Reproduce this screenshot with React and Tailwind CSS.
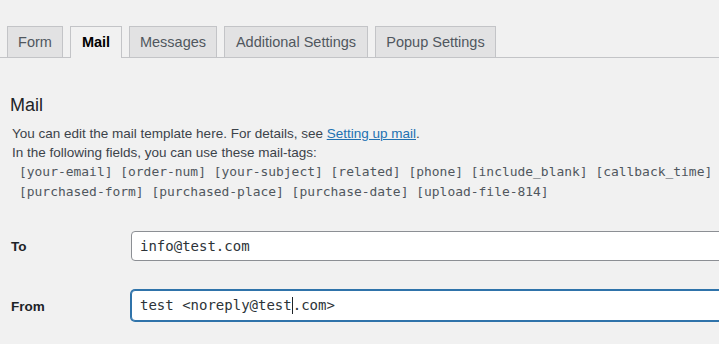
import { useState } from "react";

const tabs = [
  { label: "Form", w: "w-[56px]" },
  { label: "Mail", w: "w-[52px]" },
  { label: "Messages", w: "w-[88px]" },
  { label: "Additional Settings", w: "w-[144px]" },
  { label: "Popup Settings", w: "w-[121px]" },
];

const tagLines = [
  "[your-email] [order-num] [your-subject] [related] [phone] [include_blank] [callback_time]",
  "[purchased-form] [purchased-place] [purchase-date] [upload-file-814]",
];

function Field({ label, value, focused, caretAt }) {
  return (
    <div className="flex items-center">
      <div className="w-[131px] shrink-0 pl-[11px] pt-[3px] text-[13.5px] font-bold text-[#1d2327]">{label}</div>
      <div
        className={
          focused
            ? "flex h-[31px] w-[620px] shrink-0 items-center rounded-[4px] border border-[#2f73aa] bg-white px-[8px] shadow-[0_0_0_1px_#2f73aa]"
            : "flex h-[30px] w-[620px] shrink-0 items-center rounded-[4px] border border-[#8c8f94] bg-white px-[8px]"
        }
      >
        <span className="whitespace-pre font-['DejaVu_Sans_Mono',monospace] text-[14px] text-[#2c3338]">
          {caretAt != null ? value.slice(0, caretAt) : value}
        </span>
        {caretAt != null && (
          <>
            <span className="h-[17px] w-px bg-[#1d2327]" />
            <span className="whitespace-pre font-['DejaVu_Sans_Mono',monospace] text-[14px] text-[#2c3338]">
              {value.slice(caretAt)}
            </span>
          </>
        )}
      </div>
    </div>
  );
}

export default function App() {
  const [active, setActive] = useState("Mail");

  return (
    <div className="h-[344px] w-full overflow-hidden bg-[#f1f1f1] font-['Liberation_Sans',Arial,sans-serif]">
      {/* tab strip */}
      <div className="flex items-end gap-[7px] border-b border-[#c3c4c7] pl-[7px] pt-[26px]">
        {tabs.map((t) =>
          t.label === active ? (
            <button
              key={t.label}
              onClick={() => setActive(t.label)}
              className={`${t.w} -mb-px flex h-[32px] shrink-0 items-center justify-center border border-b-0 border-[#c3c4c7] bg-[#f1f1f1] text-[14.5px] font-bold text-black`}
            >
              {t.label}
            </button>
          ) : (
            <button
              key={t.label}
              onClick={() => setActive(t.label)}
              className={`${t.w} flex h-[31px] shrink-0 items-center justify-center border border-b-0 border-[#c3c4c7] bg-[#e2e2e3] pt-px text-[14.5px] text-[#50575e]`}
            >
              {t.label}
            </button>
          )
        )}
      </div>

      <h2 className="mt-[35px] pl-[10px] text-[18px] leading-[24px] font-normal text-[#1d2327]">Mail</h2>

      <div className="mt-[7px] pl-[12px] text-[13.5px] leading-[19px] text-[#3c434a]">
        <p>
          You can edit the mail template here. For details, see{" "}
          <a href="#" className="text-[#2271b1] underline">Setting up mail</a>.
        </p>
        <p>In the following fields, you can use these mail-tags:</p>
      </div>

      <div className="pl-[19px] font-['DejaVu_Sans_Mono',monospace] text-[12.95px] leading-[20px] text-[#50575e]">
        {tagLines.map((l) => (
          <div key={l} className="whitespace-pre">{l}</div>
        ))}
      </div>

      <div className="mt-[29px] flex flex-col gap-[29px]">
        <Field label="To" value="info@test.com" />
        <Field label="From" value="test <noreply@test.com>" focused caretAt={18} />
      </div>
    </div>
  );
}
